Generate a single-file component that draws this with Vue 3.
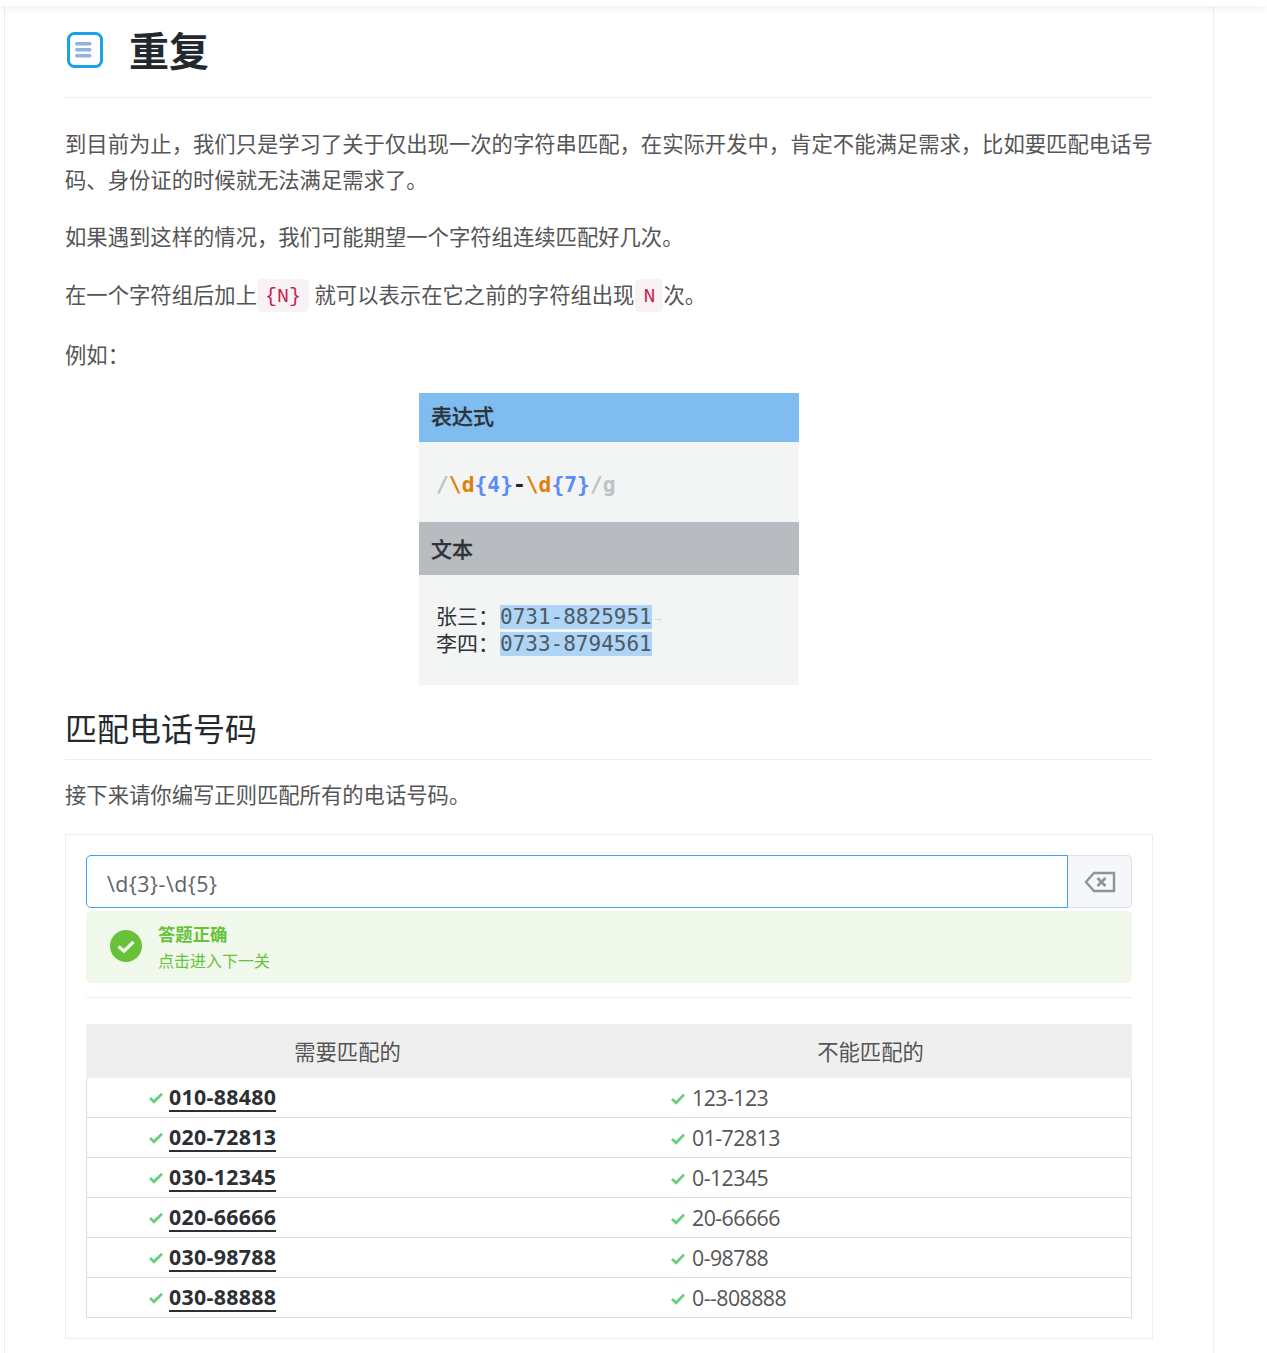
<script setup>
const intro = '到目前为止，我们只是学习了关于仅出现一次的字符串匹配，在实际开发中，肯定不能满足需求，比如要匹配电话号码、身份证的时候就无法满足需求了。'
const rows = [
  ['010-88480', '123-123'],
  ['020-72813', '01-72813'],
  ['030-12345', '0-12345'],
  ['020-66666', '20-66666'],
  ['030-98788', '0-98788'],
  ['030-88888', '0--808888'],
]
</script>

<template>
  <div class="page">
    <div class="topbar"></div>
    <main class="doc">
      <h1 class="title">
        <svg class="title-icon" width="38" height="38" viewBox="0 0 38 38">
          <rect x="2.5" y="2.5" width="33" height="33" rx="6" fill="none" stroke="#1ba1e6" stroke-width="3" />
          <rect x="9" y="11" width="16.5" height="3.6" rx="1.8" fill="#8fb1e3" />
          <rect x="9" y="17" width="16.5" height="3.6" rx="1.8" fill="#8fb1e3" />
          <rect x="9" y="23" width="16.5" height="3.6" rx="1.8" fill="#8fb1e3" />
        </svg>
        <span class="title-text">重复</span>
      </h1>
      <p class="para">{{ intro }}</p>
      <p class="para second">如果遇到这样的情况，我们可能期望一个字符组连续匹配好几次。</p>
      <p class="para code-line">在一个字符组后加上<code>{N}</code> 就可以表示在它之前的字符组出现<code class="code-n">N</code>次。</p>
      <p class="para example">例如：</p>

      <div class="figure">
        <div class="fig-head blue">表达式</div>
        <div class="fig-regex"><i>/</i><b>\d</b><em>{4}</em><u>-</u><b>\d</b><em>{7}</em><i>/g</i></div>
        <div class="fig-head gray">文本</div>
        <div class="fig-text">
          <div class="fig-line">张三：<mark>0731-8825951</mark><small>¬</small></div>
          <div class="fig-line">李四：<mark>0733-8794561</mark></div>
        </div>
      </div>

      <h2 class="subtitle">匹配电话号码</h2>
      <p class="para task">接下来请你编写正则匹配所有的电话号码。</p>

      <section class="panel">
        <div class="input-group">
          <div class="input">\d{3}-\d{5}</div>
          <div class="append">
            <svg width="32" height="24" viewBox="0 0 32 24" fill="none" stroke="#909399" stroke-width="2.4">
              <path d="M30 3H10L2 12l8 9h20z" stroke-linejoin="miter" />
              <path d="M13.5 8l8 8M21.5 8l-8 8" stroke-width="2.6" />
            </svg>
          </div>
        </div>
        <div class="alert">
          <svg class="alert-icon" width="32" height="32" viewBox="0 0 32 32">
            <circle cx="16" cy="16" r="16" fill="#67c23a" />
            <path d="M8.5 16.5l5.5 4.5 9.5-9" fill="none" stroke="#f0f9eb" stroke-width="3.2" />
          </svg>
          <div class="alert-body">
            <div class="alert-title">答题正确</div>
            <div class="alert-desc">点击进入下一关</div>
          </div>
        </div>
        <hr class="rule" />
        <table class="cases">
          <thead>
            <tr><th>需要匹配的</th><th>不能匹配的</th></tr>
          </thead>
          <tbody>
            <tr v-for="row in rows" :key="row[0]">
              <td>
                <svg class="tick" width="14" height="12" viewBox="0 0 14 12"><path d="M1 6l4 3.8 8-8" fill="none" stroke="#67d07f" stroke-width="2.8" /></svg>
                <strong>{{ row[0] }}</strong>
              </td>
              <td>
                <svg class="tick" width="14" height="12" viewBox="0 0 14 12"><path d="M1 6l4 3.8 8-8" fill="none" stroke="#67d07f" stroke-width="2.8" /></svg>
                <span>{{ row[1] }}</span>
              </td>
            </tr>
          </tbody>
        </table>
      </section>
    </main>
  </div>
</template>

<style>
html, body { margin: 0; background: #fff; }
</style>

<style scoped>
.page {
  position: relative;
  width: 1267px;
  height: 1353px;
  overflow: hidden;
  font-family: "Open Sans", "Noto Sans CJK SC", sans-serif;
  font-size: 21.33px;
  line-height: 36px;
  color: #555;
  background: #fff;
}
.topbar {
  height: 6px;
  background: #fff;
  box-shadow: 0 1px 8px rgba(0, 0, 0, 0.09);
  position: relative;
  z-index: 2;
}
.doc {
  box-sizing: border-box;
  width: 1210px;
  height: 1347px;
  margin-left: 4px;
  padding: 0 60px;
  border-left: 1px solid #eee;
  border-right: 1px solid #eee;
}
.title {
  display: flex;
  align-items: center;
  gap: 25px;
  height: 92px;
  margin: 0 0 28px;
  padding-bottom: 3px;
  box-sizing: border-box;
  border-bottom: 1px solid #eee;
  font-size: 40px;
  font-weight: 700;
  color: #24292e;
  line-height: 1;
}
.title-icon { margin-left: 1px; }
.title-text { padding-top: 1px; }
.para { margin: 0 0 21px; }
.second { margin-bottom: 22px; }
.code-line { margin-bottom: 24px; }
.example { margin-bottom: 20px; }
.task { margin-bottom: 21px; }
code {
  display: inline-block;
  padding: 0 8px;
  height: 33px;
  line-height: 35px;
  border-radius: 5px;
  background: #f8f2f5;
  color: #c7254e;
  font-family: "Liberation Mono", monospace;
  font-size: 20px;
  vertical-align: top;
  margin-top: 2px;
}
.code-n { margin-left: 1px; }
.figure {
  width: 380px;
  height: 292px;
  margin: 0 auto;
  background: #f3f5f5;
  color: #2d3338;
  display: flex;
  flex-direction: column;
}
.fig-head {
  display: flex;
  align-items: center;
  box-sizing: border-box;
  padding-left: 12px;
  font-size: 21px;
  font-weight: 500;
  -webkit-text-stroke: 0.3px #2d3338;
}
.fig-head.blue { height: 49px; padding-bottom: 3px; background: #7fbdf0; }
.fig-head.gray { height: 53px; background: #b8bcc0; }
.fig-regex {
  box-sizing: border-box;
  height: 80px;
  padding: 5px 0 0 17px;
  display: flex;
  align-items: center;
  font-family: "DejaVu Sans Mono", monospace;
  font-size: 21.3px;
  font-weight: 700;
}
.fig-regex i { font-style: normal; color: #bcc2c7; }
.fig-regex b { color: #e07f0c; }
.fig-regex em { font-style: normal; color: #5d8cf8; }
.fig-regex u { text-decoration: none; color: #222; }
.fig-text { padding: 28px 0 0 17px; }
.fig-line {
  height: 27px;
  line-height: 27px;
  font-size: 21px;
  font-weight: 400;
  white-space: nowrap;
}
.fig-line mark {
  margin-left: 1px;
  background: #aed5f5;
  color: #4e5a63;
  font-family: "DejaVu Sans Mono", monospace;
  font-size: 21px;
}
.fig-line small { color: #d5d8da; font-size: 12px; margin-left: 3px; }
.subtitle {
  height: 58px;
  margin: 17px 0 17px;
  box-sizing: border-box;
  border-bottom: 1px solid #eee;
  font-size: 32px;
  font-weight: 400;
  line-height: 54px;
  color: #24292e;
}
.panel {
  box-sizing: border-box;
  height: 505px;
  padding: 20px;
  border: 1px solid #eee;
}
.input-group { display: flex; height: 53px; }
.input {
  flex: 1;
  box-sizing: border-box;
  padding: 0 20px;
  line-height: 56px;
  letter-spacing: 0.5px;
  color: #606266;
  border: 1px solid #409eff;
  border-radius: 5px 0 0 5px;
}
.append {
  width: 64px;
  box-sizing: border-box;
  display: flex;
  align-items: center;
  justify-content: center;
  background: #f5f7fa;
  border: 1px solid #dcdfe6;
  border-left: 0;
  border-radius: 0 5px 5px 0;
}
.alert {
  display: flex;
  align-items: center;
  height: 72px;
  margin-top: 3px;
  padding-left: 24px;
  border-radius: 5px;
  background: #f0f9eb;
  color: #67c23a;
}
.alert-icon { margin: 0 16px 2px 0; }
.alert-body { padding-top: 2px; }
.alert-title { font-size: 17.33px; font-weight: 700; line-height: 25px; }
.alert-desc { font-size: 16px; line-height: 25px; margin-top: 2px; }
.rule { height: 1px; margin: 14px 0 26px; border: 0; background: #eee; }
.cases {
  width: 100%;
  border-collapse: separate;
  border-spacing: 0;
  table-layout: fixed;
  line-height: 28px;
}
.cases th {
  height: 54px;
  box-sizing: border-box;
  padding: 2px 0 0;
  background: #efefef;
  font-weight: 400;
  line-height: 30px;
  text-align: center;
}
.cases tbody tr { height: 40px; }
.cases td {
  box-sizing: border-box;
  height: 40px;
  padding: 0 0 0 62px;
  border-bottom: 1px solid #ddd;
}
.cases td:first-child { border-left: 1px solid #ddd; }
.cases td:last-child { border-right: 1px solid #ddd; }
.cases td span { letter-spacing: -0.55px; }
.tick { margin-right: 6px; position: relative; top: -1px; }
.cases td:last-child .tick { margin-right: 7px; }
.cases strong {
  font-weight: 700;
  color: #2c2f33;
  letter-spacing: 0.33px;
  border-bottom: 2px solid #2c2f33;
  display: inline-block;
  line-height: 27px;
}
</style>
